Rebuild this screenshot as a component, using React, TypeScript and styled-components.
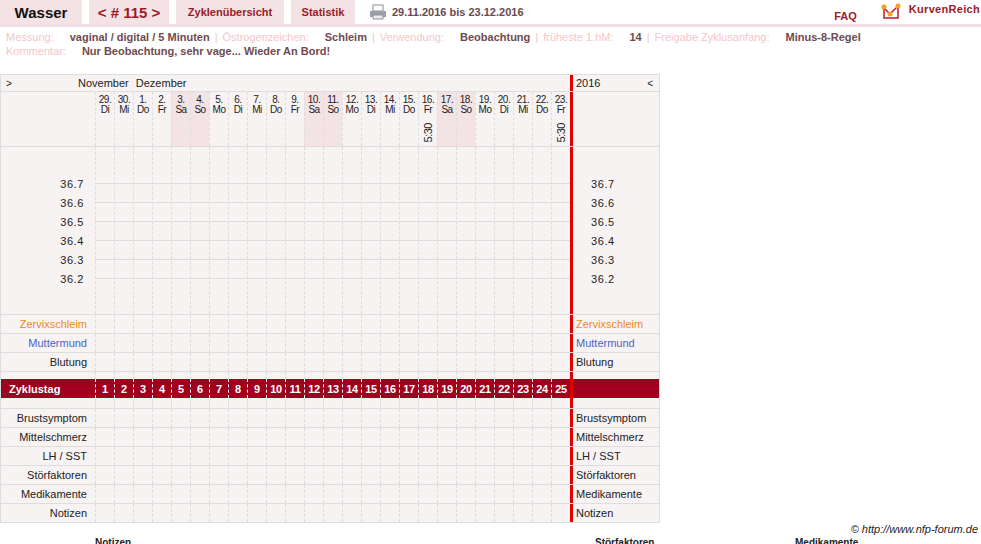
import styled, { createGlobalStyle } from "styled-components"

const Global = createGlobalStyle`
  body { margin: 0; font-family: "Liberation Sans", Arial, sans-serif; background: #fff; color: #222; }
`

const Page = styled.div`
  width: 981px;
  height: 544px;
  overflow: hidden;
  position: relative;
`

const TopBar = styled.div`
  display: flex;
  align-items: stretch;
  height: 24px;
  border-bottom: 3px solid #f3dfe1;
`

const Tab = styled.div<{ w: number; big?: boolean; dark?: boolean }>`
  width: ${p => p.w}px;
  margin-right: 7px;
  background: #f3e3e5;
  display: flex;
  align-items: center;
  justify-content: center;
  font-weight: bold;
  font-size: ${p => (p.big ? 15 : 11)}px;
  color: ${p => (p.dark ? "#111" : "#9b1b2a")};
`

const DateRange = styled.div`
  display: flex;
  align-items: center;
  gap: 5px;
  padding-left: 7px;
  font-size: 11px;
  font-weight: bold;
  color: #6b4a4e;
  flex: 1;
`

const Faq = styled.div`
  font-size: 11px;
  font-weight: bold;
  color: #9b1b2a;
  align-self: flex-end;
  padding-bottom: 2px;
  margin-right: 24px;
`

const Logo = styled.div`
  display: flex;
  align-items: flex-start;
  gap: 6px;
  font-size: 11px;
  font-weight: bold;
  color: #9b1b2a;
  letter-spacing: 0.3px;
  padding-top: 3px;
  margin-right: 1px;
`

const Meta = styled.div`
  padding: 3px 6px 0;
  font-size: 11px;
  line-height: 14px;
`

const MetaLine = styled.div`
  display: flex;
  gap: 5px;
`

const Key = styled.span`
  color: #f3c6ca;
  margin-right: 11px;
`

const Val = styled.span`
  color: #704a4e;
  font-weight: bold;
`

const Sep = styled.span`
  color: #f3c6ca;
`

const Table = styled.div`
  margin-top: 16px;
  width: 658px;
  border: 1px solid #ddd;
  background: #f8f3f3;
  font-size: 11px;
`

const Row = styled.div<{ h: number; line?: boolean; red?: boolean }>`
  display: flex;
  height: ${p => p.h}px;
  border-top: ${p => (p.line ? "1px solid #ddd" : "none")};
  box-sizing: border-box;
  background: ${p => (p.red ? "#a0001e" : "transparent")};
  color: ${p => (p.red ? "#fff" : "inherit")};
`

const Label = styled.div<{ color?: string; bold?: boolean }>`
  width: 94px;
  flex: none;
  display: flex;
  align-items: center;
  justify-content: flex-end;
  padding-right: 8px;
  box-sizing: border-box;
  color: ${p => p.color || "#222"};
  font-weight: ${p => (p.bold ? "bold" : "normal")};
`

const RedLabel = styled(Label)`
  justify-content: flex-start;
  padding-left: 8px;
`

const Days = styled.div`
  display: flex;
  width: 475px;
  flex: none;
`

const Day = styled.div<{ shade?: boolean; light?: boolean }>`
  width: 19px;
  flex: none;
  box-sizing: border-box;
  border-left: 1px dashed ${p => (p.light ? "#fff" : "#ddd")};
  background: ${p => (p.shade ? "#f3e3e5" : "transparent")};
  display: flex;
  flex-direction: column;
  align-items: center;
  font-size: 10px;
  line-height: 10px;
  letter-spacing: -0.5px;
`

const DayNum = styled(Day)`
  justify-content: center;
  font-size: 11px;
  font-weight: bold;
  letter-spacing: -0.3px;
`

const DateText = styled.div`
  padding-top: 3px;
  text-align: center;
`

const Time = styled.div`
  margin-top: 8px;
  writing-mode: vertical-rl;
  transform: rotate(180deg);
  font-size: 11px;
`

const Divider = styled.div`
  width: 3px;
  flex: none;
  align-self: stretch;
  background: #e00000;
`

const Right = styled.div<{ color?: string }>`
  flex: 1;
  display: flex;
  align-items: center;
  padding-left: 3px;
  color: ${p => p.color || "#222"};
`

const HeadRow = styled.div`
  display: flex;
  height: 16px;
  align-items: center;
`

const Arrow = styled.div`
  width: 77px;
  padding-left: 5px;
  box-sizing: border-box;
  font-size: 10px;
`

const Months = styled.div`
  width: 492px;
  word-spacing: 4px;
`

const Back = styled.span`
  margin-left: auto;
  margin-right: 6px;
  font-size: 10px;
`

const TempLabels = styled.div`
  width: 94px;
  flex: none;
  padding-top: 30px;
  box-sizing: border-box;
`

const TempLabel = styled.div<{ left?: boolean }>`
  height: 19px;
  line-height: 14px;
  text-align: ${p => (p.left ? "left" : "right")};
  padding: ${p => (p.left ? "0 0 0 18px" : "0 11px 0 0")};
  font-size: 11px;
  letter-spacing: 0.6px;
`

const TempDays = styled(Days)`
  background: linear-gradient(#ddd, #ddd) 0 36px / 100% 1px no-repeat,
    linear-gradient(#ddd, #ddd) 0 55px / 100% 1px no-repeat,
    linear-gradient(#ddd, #ddd) 0 74px / 100% 1px no-repeat,
    linear-gradient(#ddd, #ddd) 0 93px / 100% 1px no-repeat,
    linear-gradient(#ddd, #ddd) 0 112px / 100% 1px no-repeat,
    linear-gradient(#ddd, #ddd) 0 131px / 100% 1px no-repeat;
`

const TempRight = styled.div`
  flex: 1;
  padding-top: 30px;
`

const Footer = styled.div`
  position: relative;
  font-size: 10px;
  font-weight: bold;
`

const Copy = styled.div`
  position: absolute;
  right: 3px;
  top: 0;
  font-style: italic;
  font-size: 11px;
  font-weight: normal;
`

const FooterLabels = styled.div`
  display: flex;
  padding-top: 14px;
`

const FooterLabel = styled.div<{ w: number }>`
  width: ${p => p.w}px;
`

const dates = [
  ["29.", "Di"], ["30.", "Mi"], ["1.", "Do"], ["2.", "Fr"], ["3.", "Sa"], ["4.", "So"], ["5.", "Mo"],
  ["6.", "Di"], ["7.", "Mi"], ["8.", "Do"], ["9.", "Fr"], ["10.", "Sa"], ["11.", "So"], ["12.", "Mo"],
  ["13.", "Di"], ["14.", "Mi"], ["15.", "Do"], ["16.", "Fr"], ["17.", "Sa"], ["18.", "So"], ["19.", "Mo"],
  ["20.", "Di"], ["21.", "Mi"], ["22.", "Do"], ["23.", "Fr"],
]
const temps = ["36.7", "36.6", "36.5", "36.4", "36.3", "36.2"]

const EmptyDays = () => (
  <Days>
    {dates.map((_, i) => <Day key={i} />)}
  </Days>
)

const DataRow = ({ name, color, h = 19 }: { name: string; color?: string; h?: number }) => (
  <Row h={h} line>
    <Label color={color}>{name}</Label>
    <EmptyDays />
    <Divider />
    <Right color={color}>{name}</Right>
  </Row>
)

const Printer = () => (
  <svg width="18" height="16" viewBox="0 0 18 16">
    <rect x="4" y="1" width="10" height="6" fill="#fff" stroke="#8a8f98" />
    <path d="M1 7h16v6H1z" fill="#9aa0aa" />
    <path d="M4 11h10v4H4z" fill="#eee" stroke="#8a8f98" />
  </svg>
)

const Crown = () => (
  <svg width="22" height="18" viewBox="0 0 22 18">
    <path d="M3 6v9h14V3" fill="none" stroke="#c3182b" strokeWidth="1.5" />
    <path d="M3 5l6 6 8-8" fill="none" stroke="#c3182b" strokeWidth="1.5" />
    <circle cx="3" cy="4" r="2.5" fill="#f2a31b" />
    <circle cx="9" cy="11" r="2.5" fill="#f2a31b" />
    <circle cx="17" cy="3" r="2.5" fill="#f2a31b" />
  </svg>
)

const isWeekend = (i: number) => dates[i][1] === "Sa" || dates[i][1] === "So"

export default function App() {
  return (
    <Page>
      <Global />
      <TopBar>
        <Tab w={82} big dark>Wasser</Tab>
        <Tab w={80} big>&lt; # 115 &gt;</Tab>
        <Tab w={108}>Zyklenübersicht</Tab>
        <Tab w={64}>Statistik</Tab>
        <DateRange><Printer />29.11.2016 bis 23.12.2016</DateRange>
        <Faq>FAQ</Faq>
        <Logo><Crown />KurvenReich</Logo>
      </TopBar>
      <Meta>
        <MetaLine>
          <Key>Messung:</Key><Val>vaginal / digital / 5 Minuten</Val><Sep>|</Sep>
          <Key>Östrogenzeichen:</Key><Val>Schleim</Val><Sep>|</Sep>
          <Key>Verwendung:</Key><Val>Beobachtung</Val><Sep>|</Sep>
          <Key>früheste 1.hM:</Key><Val>14</Val><Sep>|</Sep>
          <Key>Freigabe Zyklusanfang:</Key><Val>Minus-8-Regel</Val>
        </MetaLine>
        <MetaLine>
          <Key>Kommentar:</Key><Val>Nur Beobachtung, sehr vage... Wieder An Bord!</Val>
        </MetaLine>
      </Meta>
      <Table>
        <HeadRow>
          <Arrow>&gt;</Arrow>
          <Months>November Dezember</Months>
          <Divider />
          <Right>2016<Back>&lt;</Back></Right>
        </HeadRow>
        <Row h={55} line>
          <Label />
          <Days>
            {dates.map(([d, w], i) => (
              <Day key={i} shade={isWeekend(i)}>
                <DateText>{d}<br />{w}</DateText>
                {(d === "16." || d === "23.") && <Time>5:30</Time>}
              </Day>
            ))}
          </Days>
          <Divider />
          <Right />
        </Row>
        <Row h={168} line>
          <TempLabels>
            {temps.map(t => <TempLabel key={t}>{t}</TempLabel>)}
          </TempLabels>
          <TempDays>
            {dates.map((_, i) => <Day key={i} />)}
          </TempDays>
          <Divider />
          <TempRight>
            {temps.map(t => <TempLabel key={t} left>{t}</TempLabel>)}
          </TempRight>
        </Row>
        <DataRow name="Zervixschleim" color="#f08a1c" />
        <DataRow name="Muttermund" color="#4a63c8" />
        <DataRow name="Blutung" />
        <Row h={8} line>
          <Label />
          <EmptyDays />
          <Divider />
          <Right />
        </Row>
        <Row h={19} red>
          <RedLabel bold color="#fff">Zyklustag</RedLabel>
          <Days>
            {dates.map((_, i) => <DayNum key={i} light>{i + 1}</DayNum>)}
          </Days>
          <Divider />
          <Right />
        </Row>
        <Row h={10}>
          <Label />
          <EmptyDays />
          <Divider />
          <Right />
        </Row>
        <DataRow name="Brustsymptom" />
        <DataRow name="Mittelschmerz" />
        <DataRow name="LH / SST" />
        <DataRow name="Störfaktoren" />
        <DataRow name="Medikamente" />
        <DataRow name="Notizen" />
      </Table>
      <Footer>
        <Copy>© http://www.nfp-forum.de</Copy>
        <FooterLabels>
          <FooterLabel w={95} />
          <FooterLabel w={500}>Notizen</FooterLabel>
          <FooterLabel w={200}>Störfaktoren</FooterLabel>
          <FooterLabel w={100}>Medikamente</FooterLabel>
        </FooterLabels>
      </Footer>
    </Page>
  )
}
